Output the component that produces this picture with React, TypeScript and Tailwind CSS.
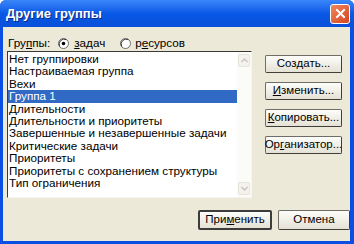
import React from "react";

const items = [
  "Нет группировки",
  "Настраиваемая группа",
  "Вехи",
  "Группа 1",
  "Длительности",
  "Длительности и приоритеты",
  "Завершенные и незавершенные задачи",
  "Критические задачи",
  "Приоритеты",
  "Приоритеты с сохранением структуры",
  "Тип ограничения",
];

function Btn({ children, def = false, w = "w-[77px]", h = "h-[18px]" }: { children: React.ReactNode; def?: boolean; w?: string; h?: string }) {
  return (
    <div
      className={`${w} ${h} flex items-center justify-center rounded-[2px] bg-gradient-to-b from-[#fdfdfb] to-[#e4e1d4] text-[11.5px] text-black ${
        def
          ? "border-[2px] border-[#3c3c3c]"
          : "border border-[#6f6d66] border-b-[#3f3e3a] border-r-[#3f3e3a]"
      }`}
    >
      {children}
    </div>
  );
}

function Radio({ checked }: { checked: boolean }) {
  return (
    <svg width="11" height="11" viewBox="0 0 11 11">
      <circle cx="5.5" cy="5.5" r="5" fill="#fff" stroke="#6b6b6b" strokeWidth="1" />
      <path d="M1.6 8.2 A5 5 0 0 1 8.2 1.6" fill="none" stroke="#404040" strokeWidth="1" />
      {checked && <circle cx="5.5" cy="5.5" r="1.8" fill="#000" />}
    </svg>
  );
}

export default function App() {
  return (
    <div
      className="w-[354px] h-[244px] bg-[#0a4ee4] flex flex-col rounded-t-[6px] overflow-hidden"
      style={{ fontFamily: '"Liberation Sans", Arial, sans-serif' }}
    >
      <div className="h-[27px] shrink-0 flex items-center justify-between pl-[6px] pr-[4px] bg-gradient-to-b from-[#3a86fa] via-[#0a58e6] to-[#0850d8]">
        <span className="text-white font-bold text-[13px] [text-shadow:1px_1px_0_#0a2a80]">Другие группы</span>
        <div className="w-[20px] h-[20px] rounded-[3px] border border-white bg-gradient-to-br from-[#f0865c] to-[#d5431c] flex items-center justify-center">
          <svg width="11" height="11" viewBox="0 0 11 11">
            <path d="M2 2 L9 9 M9 2 L2 9" stroke="#fff" strokeWidth="2" strokeLinecap="square" />
          </svg>
        </div>
      </div>
      <div className="flex-1 ml-[3px] mr-[4px] mb-[3px] bg-[#ece9d8] flex flex-col pl-[4px] pt-[9px]">
        <div className="flex items-center h-[14px] text-[11.7px] text-black">
          <span className="ml-[1px]">Гру<span className="underline">п</span>пы:</span>
          <div className="flex items-center ml-[8px]">
            <Radio checked />
            <span className="ml-[5px]"><span className="underline">з</span>адач</span>
          </div>
          <div className="flex items-center ml-[15px]">
            <Radio checked={false} />
            <span className="ml-[4px]">р<span className="underline">е</span>сурсов</span>
          </div>
        </div>
        <div className="flex mt-[1px]">
          <div className="w-[245px] h-[147px] flex border border-t-[#3a3a36] border-l-[#3a3a36] border-b-[#f6f5ef] border-r-[#f6f5ef] bg-white">
            <div className="flex-1 flex flex-col pt-[1px]">
              {items.map((t, i) => (
                <div
                  key={t}
                  className={`h-[12.4px] leading-[12.4px] text-[11.7px] pl-[1px] whitespace-nowrap ${
                    i === 3 ? "bg-[#316ac5] text-white" : "text-black"
                  }`}
                >
                  {t}
                </div>
              ))}
            </div>
            <div className="w-[14px] flex flex-col justify-between bg-[#fbfbf8] py-[2px]">
              <div className="h-[13px] mx-[1px] rounded-[2px] border border-[#e6e4dc] bg-[#f3f2ec] flex items-center justify-center">
                <svg width="7" height="5" viewBox="0 0 7 5">
                  <path d="M0.5 4 L3.5 1 L6.5 4" fill="none" stroke="#c6c4bb" strokeWidth="1.4" />
                </svg>
              </div>
              <div className="h-[13px] mx-[1px] rounded-[2px] border border-[#e6e4dc] bg-[#f3f2ec] flex items-center justify-center">
                <svg width="7" height="5" viewBox="0 0 7 5">
                  <path d="M0.5 1 L3.5 4 L6.5 1" fill="none" stroke="#c6c4bb" strokeWidth="1.4" />
                </svg>
              </div>
            </div>
          </div>
          <div className="flex flex-col ml-[13px] pt-[4px] gap-[9px]">
            <Btn>Соз<span className="underline">д</span>ать...</Btn>
            <Btn><span className="underline">И</span>зменить...</Btn>
            <Btn><span className="underline">К</span>опировать...</Btn>
            <Btn>Ор<span className="underline">г</span>анизатор...</Btn>
          </div>
        </div>
        <div className="flex justify-end mt-[12px] gap-[6px]">
          <Btn def w="w-[74px]" h="h-[20px]">При<span className="underline">м</span>енить</Btn>
          <Btn w="w-[72px]" h="h-[20px]">Отмена</Btn>
        </div>
      </div>
    </div>
  );
}
